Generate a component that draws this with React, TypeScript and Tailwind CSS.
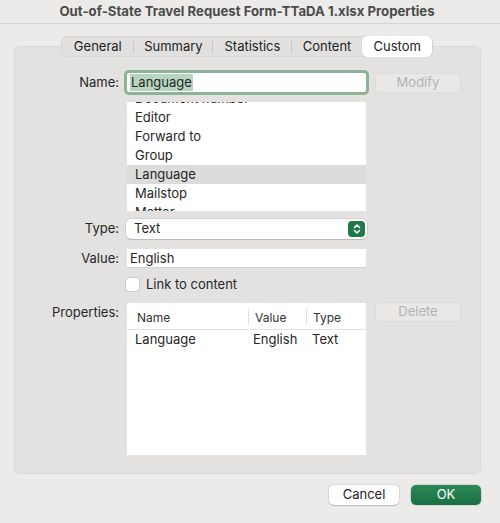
import * as React from "react"

const listItems = ["Document number", "Editor", "Forward to", "Group", "Language", "Mailstop", "Matter"]

const tabs = [
  { label: "General", w: "w-[72px]" },
  { label: "Summary", w: "w-[80px]" },
  { label: "Statistics", w: "w-[79px]" },
  { label: "Content", w: "w-[71px]" },
  { label: "Custom", w: "w-[70px]" },
]

export default function App() {
  const [selected, setSelected] = React.useState("Language")

  return (
    <div className="w-[500px] h-[523px] bg-[#ecebea] text-[13px] text-[#262626] flex flex-col" style={{ fontFamily: "Inter, 'Noto Sans', sans-serif" }}>
      {/* title bar */}
      <div className="h-[24px] shrink-0 border-b border-[#d6d5d4] flex items-center justify-center">
        <span className="font-bold text-[#4b4b4b] text-[13.2px] mr-[6px]">Out-of-State Travel Request Form-TTaDA 1.xlsx Properties</span>
      </div>

      {/* tabs */}
      <div className="relative z-10 mt-[12px] ml-[61px] flex h-[21px] w-[372px] rounded-[6px] bg-[#e1e0de] border border-[#d8d7d5]">
        {tabs.map((t, i) => {
          const active = t.label === "Custom"
          const nextActive = tabs[i + 1]?.label === "Custom"
          return (
            <div key={t.label} className={`${t.w} flex items-center justify-center relative ${active ? "bg-white rounded-[5px] shadow-[0_0_1px_rgba(0,0,0,0.25)] -my-px" : ""}`}>
              <span className="text-[13px] text-[#222]">{t.label}</span>
              {!active && !nextActive && i < tabs.length - 1 && (
                <span className="absolute right-0 top-[4px] h-[12px] w-px bg-[#c9c8c6]" />
              )}
            </div>
          )
        })}
      </div>

      {/* panel */}
      <div className="-mt-[11px] ml-[14px] w-[467px] h-[428px] rounded-[6px] bg-[#e3e2e0] border border-[#dad9d7] pt-[26px]">
        {/* Name */}
        <div className="flex items-center h-[19px]">
          <div className="w-[104px] text-right">Name:</div>
          <div className="ml-[8px] w-[239px] h-[19px] bg-white rounded-[2px] shadow-[0_0_0_3px_#8db396] flex items-center pl-[3px]">
            <span className="bg-[#b6d6c0] px-[1px] leading-[17px]">Language</span>
          </div>
          <div className="ml-[9px] w-[86px] h-[20px] rounded-[5px] bg-[#e9e8e7] border border-[#dddcda] flex items-center justify-center text-[#b3b2b1]">Modify</div>
        </div>

        {/* list */}
        <div className="flex mt-[10px]">
          <div className="w-[104px]" />
          <div className="ml-[8px] w-[239px] h-[109px] bg-white overflow-hidden">
            <div className="-mt-[13px]">
              {listItems.map((item) => (
                <div
                  key={item}
                  onClick={() => setSelected(item)}
                  className={`h-[19px] flex items-center pl-[8px] ${selected === item ? "bg-[#dcdcdc]" : ""}`}
                >
                  {item}
                </div>
              ))}
            </div>
          </div>
        </div>

        {/* Type */}
        <div className="flex items-center mt-[8px]">
          <div className="w-[104px] text-right">Type:</div>
          <div className="ml-[7px] w-[241px] h-[20px] bg-white rounded-[5px] shadow-[0_0_0_0.5px_rgba(0,0,0,0.15),0_1px_1px_rgba(0,0,0,0.12)] flex items-center justify-between pl-[8px] pr-[2px]">
            <span>Text</span>
            <div className="w-[17px] h-[16px] rounded-[4px] bg-[#1d7a47] flex items-center justify-center">
              <svg width="8" height="12" viewBox="0 0 8 12" fill="none" stroke="white" strokeWidth="1.6" strokeLinecap="round" strokeLinejoin="round">
                <path d="M1.5 4.5 L4 2 L6.5 4.5" />
                <path d="M1.5 7.5 L4 10 L6.5 7.5" />
              </svg>
            </div>
          </div>
        </div>

        {/* Value */}
        <div className="flex items-center mt-[10px]">
          <div className="w-[104px] text-right">Value:</div>
          <div className="ml-[8px] w-[239px] h-[19px] bg-white border-b border-[#d0cfcd] flex items-center pl-[3px]">English</div>
        </div>

        {/* checkbox */}
        <div className="flex items-center h-[16px] mt-[8px]">
          <div className="w-[104px]" />
          <div className="ml-[7px] w-[13px] h-[13px] rounded-[3px] bg-white shadow-[0_0_0_0.5px_rgba(0,0,0,0.2)]" />
          <span className="ml-[7px]">Link to content</span>
        </div>

        {/* Properties */}
        <div className="flex mt-[10px]">
          <div className="w-[104px] text-right">Properties:</div>
          <div className="ml-[8px] w-[239px] h-[152px] bg-white">
            <div className="flex h-[27px] border-b border-[#e3e3e3] text-[12px] text-[#333]">
              <div className="w-[122px] pl-[10px] flex items-end pb-[2px] relative">
                Name
                <span className="absolute right-0 top-[6px] h-[16px] w-px bg-[#e0e0e0]" />
              </div>
              <div className="w-[58px] pl-[6px] flex items-end pb-[2px] relative">
                Value
                <span className="absolute right-0 top-[6px] h-[16px] w-px bg-[#e0e0e0]" />
              </div>
              <div className="flex-1 pl-[6px] flex items-end pb-[2px]">Type</div>
            </div>
            <div className="flex h-[20px] items-center">
              <div className="w-[126px] pl-[8px]">Language</div>
              <div className="w-[59px]">English</div>
              <div className="flex-1">Text</div>
            </div>
          </div>
          <div className="ml-[9px] w-[86px] h-[20px] -mt-[1px] rounded-[5px] bg-[#e9e8e7] border border-[#dddcda] flex items-center justify-center text-[#b3b2b1]">Delete</div>
        </div>
      </div>

      {/* footer buttons */}
      <div className="flex mt-[11px] ml-[329px] gap-[12px]">
        <button className="w-[70px] h-[20px] rounded-[5px] bg-white shadow-[0_0_0_0.5px_rgba(0,0,0,0.15),0_1px_1px_rgba(0,0,0,0.15)] text-[#222] text-[13px]">Cancel</button>
        <button className="w-[70px] h-[20px] rounded-[5px] bg-gradient-to-b from-[#2b8a56] to-[#1a7042] shadow-[0_0_0_0.5px_rgba(0,0,0,0.2)] text-white text-[13px]">OK</button>
      </div>
    </div>
  )
}
